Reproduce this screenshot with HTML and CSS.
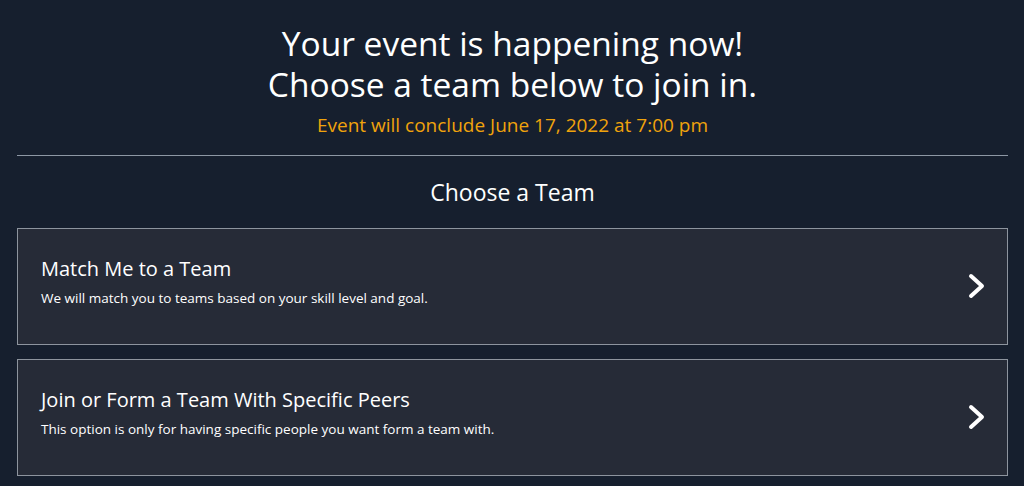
FILE: index.html
```html
<!DOCTYPE html>
<html>
<head>
<meta charset="utf-8">
<link rel="stylesheet" href="styles.css">
</head>
<body>
<main class="page">
  <header class="hero">
    <h1 class="hero-title"><span class="hero-line">Your event is happening now!</span><span class="hero-line">Choose a team below to join in.</span></h1>
    <p class="hero-sub">Event will conclude June 17, 2022 at 7:00 pm</p>
  </header>
  <hr class="divider">
  <h2 class="section-title">Choose a Team</h2>
  <div class="options">
    <a class="option" href="#">
      <div class="option-text">
        <div class="option-title">Match Me to a Team</div>
        <div class="option-desc">We will match you to teams based on your skill level and goal.</div>
      </div>
      <svg class="chevron" width="20" height="28" viewBox="0 0 20 28"><path d="M4 4 L15 14 L4 24" fill="none" stroke="#fff" stroke-width="4" stroke-linecap="round" stroke-linejoin="round"/></svg>
    </a>
    <a class="option" href="#">
      <div class="option-text">
        <div class="option-title">Join or Form a Team With Specific Peers</div>
        <div class="option-desc">This option is only for having specific people you want form a team with.</div>
      </div>
      <svg class="chevron" width="20" height="28" viewBox="0 0 20 28"><path d="M4 4 L15 14 L4 24" fill="none" stroke="#fff" stroke-width="4" stroke-linecap="round" stroke-linejoin="round"/></svg>
    </a>
  </div>
</main>
</body>
</html>
```
FILE: styles.css
```css
html, body {
  margin: 0;
  padding: 0;
  background: #161f2e;
  color: #fff;
  font-family: "Open Sans", "Noto Sans", sans-serif;
}
.page {
  padding: 0 16px 0 17px;
}
.hero {
  text-align: center;
  padding-top: 23px;
}
.hero-title {
  margin: 0;
  font-size: 33.5px;
  font-weight: 400;
  line-height: 41px;
}
.hero-line {
  display: block;
}
.hero-sub {
  margin: 7px 0 0;
  font-size: 19px;
  line-height: 26px;
  color: #f0a30c;
}
.divider {
  border: 0;
  border-top: 1px solid #8d97a4;
  margin: 17px 0 0;
}
.section-title {
  margin: 20px 0 0;
  text-align: center;
  font-size: 23px;
  font-weight: 400;
  line-height: 32px;
}
.options {
  display: flex;
  flex-direction: column;
  gap: 14px;
  margin-top: 20px;
}
.option {
  display: flex;
  align-items: center;
  justify-content: space-between;
  height: 117px;
  box-sizing: border-box;
  border: 1px solid #8d949e;
  background: #262b37;
  color: #fff;
  text-decoration: none;
  padding: 0 20px 10px 23px;
}
.option-title {
  font-size: 20px;
  line-height: 26px;
}
.option-desc {
  margin-top: 7px;
  font-size: 13.5px;
  line-height: 18px;
}
.chevron {
  display: block;
  margin-top: 8px;
}
```
